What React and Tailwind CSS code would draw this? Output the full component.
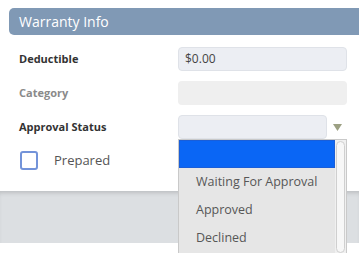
export default function App() {
  const options = ['Waiting For Approval', 'Approved', 'Declined'];

  return (
    <div className="relative w-[359px] h-[253px] overflow-hidden bg-white font-['Open_Sans',sans-serif]">
      <div className="pt-[8px]">
        <div className="ml-[9px] h-[27px] bg-[#8099b5] rounded-l-[5px] pl-[10px] flex items-center text-white text-[14px]">
          Warranty Info
        </div>
      </div>

      <div className="pt-[12px] pb-[21px] pl-[19px] flex flex-col">
        <div className="flex items-center h-[24px]">
          <div className="w-[159px] text-[11px] font-bold text-[#333]">Deductible</div>
          <div className="w-[169px] h-[24px] rounded-[4px] bg-[#eceef3] border border-[#dfe2e8] flex items-center pl-[6px] text-[12px] text-[#444]">
            $0.00
          </div>
        </div>
        <div className="flex items-center h-[24px] mt-[10px]">
          <div className="w-[159px] text-[11px] font-bold text-[#8a8a8a]">Category</div>
          <div className="w-[169px] h-[24px] rounded-[4px] bg-[#efefef]" />
        </div>
        <div className="flex items-center h-[24px] mt-[10px]">
          <div className="w-[159px] text-[11px] font-bold text-[#333]">Approval Status</div>
          <div className="w-[149px] h-[24px] rounded-[4px] bg-[#eceef3] border border-[#dfe2e8]" />
          <svg width="9" height="7" viewBox="0 0 9 7" className="ml-[6px]">
            <path d="M0 0 H9 L4.5 7 Z" fill="#9ca083" />
          </svg>
        </div>
        <div className="flex items-center mt-[12px] h-[19px]">
          <div className="ml-[1px] w-[18px] h-[19px] rounded-[3px] border-2 border-[#7393d9]" />
          <div className="ml-[16px] text-[13px] text-[#555]">Prepared</div>
        </div>
      </div>

      <div className="h-[52px] bg-[#dcdfe2] shadow-[inset_0_4px_4px_-2px_rgba(0,0,0,0.15)]" />

      <div className="absolute left-[178px] top-[139px] w-[169px] h-[120px] bg-[#e6e6e6] border border-[#c9c9c9] flex font-['Open_Sans',sans-serif]">
        <div className="flex-1 flex flex-col">
          <div className="h-[28px] bg-[#0a66f5] border border-[#1a5ed8]" />
          {options.map((o) => (
            <div key={o} className="h-[28px] flex items-center pl-[17px] text-[12.5px] text-[#575757]">
              {o}
            </div>
          ))}
        </div>
        <div className="w-[11px] bg-[#f0f0f0] flex justify-center pt-[1px]">
          <div className="w-[9px] h-[112px] rounded-full bg-[#f7f7f7] border border-[#cfcfcf]" />
        </div>
      </div>
    </div>
  );
}
